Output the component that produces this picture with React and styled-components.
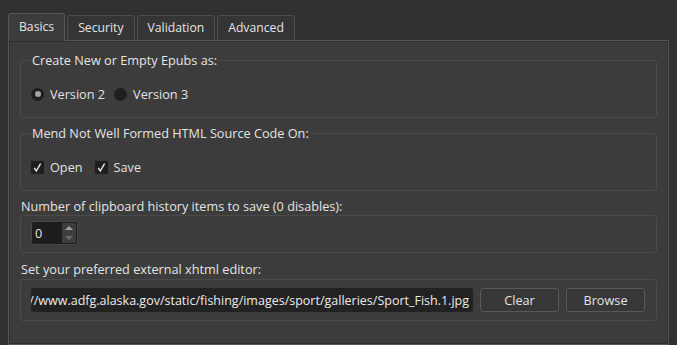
import styled, { createGlobalStyle } from "styled-components";

const GlobalStyle = createGlobalStyle`
  html, body {
    margin: 0;
    padding: 0;
    height: 100%;
    background: #313131;
    overflow: hidden;
  }
  body {
    font-family: "Open Sans", "Noto Sans", sans-serif;
    font-size: 12.7px;
    color: #e2e2e2;
  }
`;

const tabs = ["Basics", "Security", "Validation", "Advanced"];

const CheckMark = () => (
  <svg width="13" height="13" viewBox="0 0 13 13">
    <polyline points="3.2,6.8 5.3,10 9.6,2.6" fill="none" stroke="#e6e6e6" strokeWidth="1.4" />
  </svg>
);

export default function App() {
  return (
    <>
      <GlobalStyle />
      <Window>
        <TabBar>
          {tabs.map((t, i) => (
            <Tab key={t} active={i === 0}>
              {t}
            </Tab>
          ))}
        </TabBar>
        <Pane>
          <Group>
            <Legend>Create New or Empty Epubs as:</Legend>
            <Row gap={9}>
              <Choice>
                <Radio checked />
                Version 2
              </Choice>
              <Choice>
                <Radio />
                Version 3
              </Choice>
            </Row>
          </Group>

          <Group>
            <Legend>Mend Not Well Formed HTML Source Code On:</Legend>
            <Row gap={12}>
              <Choice>
                <Check>
                  <CheckMark />
                </Check>
                Open
              </Choice>
              <Choice>
                <Check>
                  <CheckMark />
                </Check>
                Save
              </Choice>
            </Row>
          </Group>

          <Label>Number of clipboard history items to save (0 disables):</Label>
          <Frame pad="5px 10px 7px 10px" gap={1}>
            <SpinBox>
              <SpinValue>0</SpinValue>
              <SpinArrows>
                <Arrow up />
                <Arrow />
              </SpinArrows>
            </SpinBox>
          </Frame>

          <Label>Set your preferred external xhtml editor:</Label>
          <Frame pad="8px 11px 8px 10px" gap={2}>
            <EditorRow>
              <PathField>
                <span>
                  http://www.adfg.alaska.gov/static/fishing/images/sport/galleries/Sport_Fish.1.jpg
                </span>
              </PathField>
              <Button>Clear</Button>
              <Button>Browse</Button>
            </EditorRow>
          </Frame>
        </Pane>
      </Window>
    </>
  );
}

const Window = styled.div`
  height: 100vh;
  display: flex;
  flex-direction: column;
  padding: 13px 8px 0 8px;
  box-sizing: border-box;
`;

const TabBar = styled.div`
  display: flex;
  align-items: flex-end;
  gap: 2px;
  position: relative;
  z-index: 1;
  margin-bottom: -1px;
`;

const Tab = styled.div`
  height: ${({ active }) => (active ? "28px" : "26px")};
  box-sizing: border-box;
  padding: 0 10px 1px 10px;
  display: flex;
  align-items: center;
  font-size: 12.2px;
  background: ${({ active }) => (active ? "#3c3c3c" : "#353535")};
  border: 1px solid ${({ active }) => (active ? "#565656" : "#4c4c4c")};
  border-bottom: 1px solid ${({ active }) => (active ? "#3c3c3c" : "#565656")};
  border-radius: 3px 3px 0 0;
  color: #e4e4e4;
`;

const Pane = styled.div`
  flex: 1;
  background: #3c3c3c;
  border: 1px solid #565656;
  box-shadow: inset 0 0 0 1px #2e2e2e;
  padding: 11px 11px 0 11px;
`;

const Group = styled.fieldset`
  margin: 0 0 7px 0;
  border: 1px solid #4a4a4a;
  border-radius: 3px;
  padding: 18px 10px 15px 10px;
  min-width: 0;
`;

const Legend = styled.legend`
  padding: 0 2px;
  margin-left: -1px;
  line-height: 16px;
  color: #e4e4e4;
`;

const Row = styled.div`
  display: flex;
  align-items: center;
  gap: ${({ gap }) => gap}px;
  height: 16px;
`;

const Choice = styled.label`
  display: flex;
  align-items: center;
  gap: 6px;
  line-height: 16px;
`;

const Radio = styled.span`
  width: 13px;
  height: 13px;
  border-radius: 50%;
  background: #1f1f1f;
  display: flex;
  align-items: center;
  justify-content: center;
  &::after {
    content: "";
    width: 6px;
    height: 6px;
    border-radius: 50%;
    background: ${({ checked }) => (checked ? "#a4a4a4" : "transparent")};
  }
`;

const Check = styled.span`
  width: 13px;
  height: 13px;
  background: #1f1f1f;
  display: flex;
`;

const Label = styled.div`
  margin: 4px 0 0 1px;
  line-height: 16px;
  color: #e4e4e4;
`;

const Frame = styled.div`
  border: 1px solid #4a4a4a;
  border-radius: 3px;
  padding: ${({ pad }) => pad};
  margin: ${({ gap }) => gap}px 0 8px 0;
`;

const SpinBox = styled.div`
  width: 47px;
  height: 24px;
  box-sizing: border-box;
  display: flex;
  padding: 1px;
  background: #1d1d1d;
  border: 1px solid #474747;
  border-radius: 3px;
`;

const SpinValue = styled.div`
  flex: 1;
  display: flex;
  align-items: center;
  padding-left: 2px;
`;

const SpinArrows = styled.div`
  width: 14px;
  display: flex;
  flex-direction: column;
  background: #3d3d3d;
  border-radius: 0 2px 2px 0;
`;

const Arrow = styled.div`
  flex: 1;
  display: flex;
  align-items: center;
  justify-content: center;
  &::after {
    content: "";
    border-left: 4px solid transparent;
    border-right: 4px solid transparent;
    ${({ up }) =>
      up ? "border-bottom: 4px solid #a0a0a0;" : "border-top: 4px solid #6a6a6a;"}
  }
`;

const EditorRow = styled.div`
  display: flex;
  gap: 7px;
  height: 24px;
`;

const PathField = styled.div`
  flex: 1;
  min-width: 0;
  background: #222222;
  border-radius: 3px;
  display: flex;
  justify-content: flex-end;
  align-items: center;
  overflow: hidden;
  white-space: nowrap;
  padding-right: 4px;
  font-size: 12.5px;
  color: #ececec;
  span {
    flex-shrink: 0;
  }
`;

const Button = styled.button`
  width: 79px;
  height: 24px;
  background: #373737;
  border: 1px solid #585858;
  border-radius: 3px;
  color: #e4e4e4;
  font: inherit;
  padding: 0;
`;
